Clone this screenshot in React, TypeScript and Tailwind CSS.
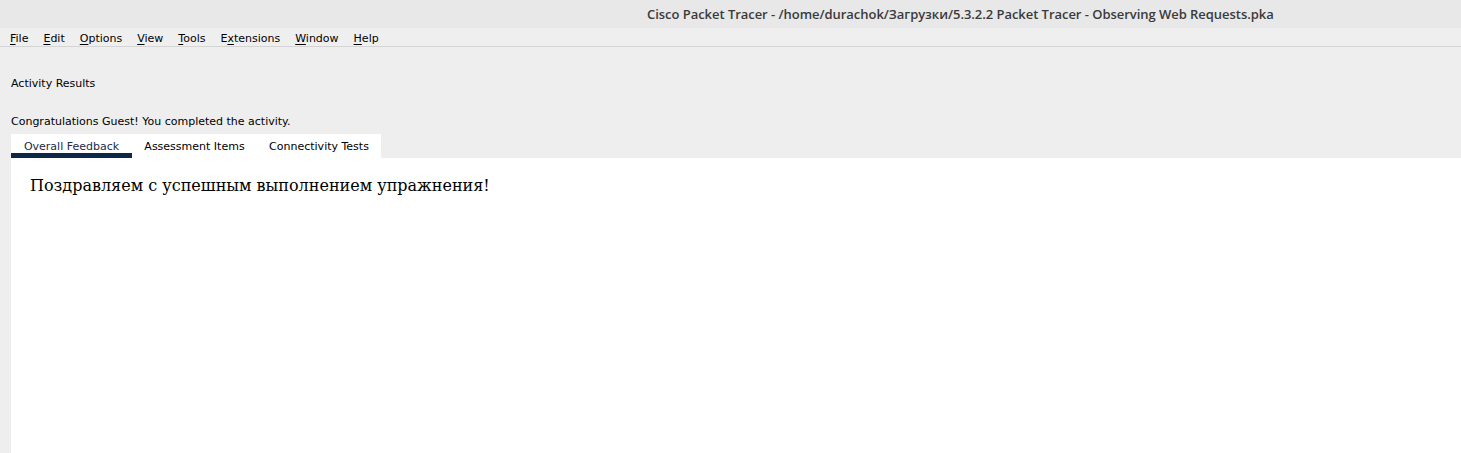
import React from "react";

const menuItems: { label: string; key: number }[] = [
  { label: "File", key: 0 },
  { label: "Edit", key: 0 },
  { label: "Options", key: 0 },
  { label: "View", key: 0 },
  { label: "Tools", key: 0 },
  { label: "Extensions", key: 1 },
  { label: "Window", key: 0 },
  { label: "Help", key: 0 },
];

const tabs = [
  { label: "Overall Feedback", width: "w-[121px]" },
  { label: "Assessment Items", width: "w-[125px]" },
  { label: "Connectivity Tests", width: "w-[124px]" },
];

export default function App() {
  return (
    <div className="w-[1461px] h-[453px] overflow-hidden flex flex-col bg-[#efefef] font-['DejaVu_Sans',sans-serif] text-[11px] leading-[13px] text-black">
      {/* Title bar */}
      <div className="h-[28px] shrink-0 bg-[#e8e8e8] flex items-center pl-[647px]">
        <span className="font-['Open_Sans',sans-serif] font-semibold text-[13px] text-[#3a3a3a] whitespace-nowrap tracking-[-0.04px]">
          Cisco Packet Tracer - /home/durachok/Загрузки/5.3.2.2 Packet Tracer - Observing Web Requests.pka
        </span>
      </div>

      {/* Menu bar */}
      <div className="h-[19px] shrink-0 flex items-center gap-[15px] pl-[10px] pt-[2px] border-b border-[#d4d4d4]">
        {menuItems.map((m) => (
          <span key={m.label} className="whitespace-nowrap">
            {m.label.slice(0, m.key)}
            <span className="underline underline-offset-2">{m.label[m.key]}</span>
            {m.label.slice(m.key + 1)}
          </span>
        ))}
      </div>

      {/* Body */}
      <div className="flex-1 flex flex-col bg-[#eeeeee] pl-[11px]">
        <p className="pt-[30px]">Activity Results</p>
        <p className="pt-[25px]">Congratulations Guest! You completed the activity.</p>

        {/* Tabs */}
        <div className="flex h-[24px] w-[370px] mt-[6px] bg-white">
          {tabs.map((t, i) => (
            <div
              key={t.label}
              className={`relative h-full flex items-center justify-center pt-[1px] whitespace-nowrap ${t.width} ${
                i === 0 ? "text-[#1c2b4a]" : "text-black"
              }`}
            >
              {t.label}
              {i === 0 && <div className="absolute left-0 right-0 bottom-0 h-[5px] bg-[#0d2749]" />}
            </div>
          ))}
        </div>

        {/* Content */}
        <div className="flex-1 bg-white pl-[19px] pt-[18px]">
          <p className="font-['DejaVu_Serif',serif] text-[16px] leading-[20px]">
            Поздравляем с успешным выполнением упражнения!
          </p>
        </div>
      </div>
    </div>
  );
}
